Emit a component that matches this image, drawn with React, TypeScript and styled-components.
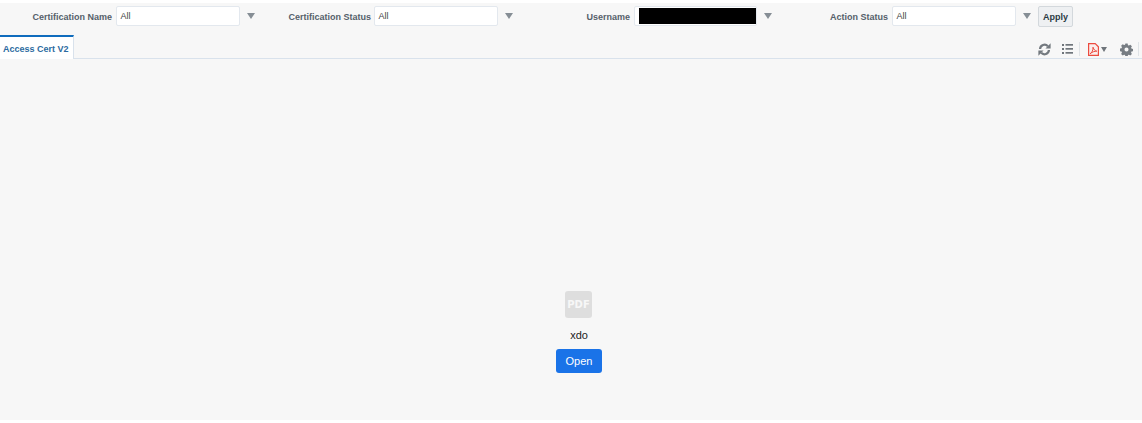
import React from "react";
import styled, { createGlobalStyle } from "styled-components";

const Global = createGlobalStyle`
  html, body { margin: 0; padding: 0; background: #fff; }
  body { font-family: "Liberation Sans", Arial, sans-serif; }
`;

const Page = styled.div`
  width: 1142px;
  height: 423px;
  padding: 3px 0;
  box-sizing: border-box;
  overflow: hidden;
`;

const Surface = styled.div`
  height: 417px;
  background: #f7f7f7;
  display: flex;
  flex-direction: column;
`;

const FilterBar = styled.div`
  height: 32px;
  padding-top: 3px;
  box-sizing: border-box;
  display: flex;
  align-items: flex-start;
`;

const Group = styled.div`
  width: 258px;
  display: flex;
  align-items: center;
  height: 20px;
  &:last-of-type { width: 265px; }
`;

const Label = styled.label<{ $w: number; $gap: number }>`
  width: ${(p) => p.$w}px;
  margin-right: ${(p) => p.$gap}px;
  padding-top: 2px;
  text-align: right;
  font-size: 9px;
  font-weight: 700;
  color: #55606a;
  white-space: nowrap;
`;

const Field = styled.div<{ $w: number }>`
  width: ${(p) => p.$w}px;
  height: 20px;
  box-sizing: border-box;
  background: #fff;
  border: 1px solid #e3e8ee;
  border-radius: 2px;
  padding: 0 3.5px;
  font-size: 9px;
  line-height: 18px;
  color: #444;
  position: relative;
`;

const Redaction = styled.div`
  position: absolute;
  left: 4px;
  top: 1px;
  width: 117px;
  height: 16px;
  background: #000;
`;

const Arrow = styled.span`
  width: 0;
  height: 0;
  margin-left: 7px;
  border-left: 4px solid transparent;
  border-right: 4px solid transparent;
  border-top: 6px solid #868e95;
`;

const ApplyButton = styled.button`
  width: 35px;
  height: 21px;
  margin-left: -1px;
  padding: 0;
  background: #eef0f2;
  border: 1px solid #d3d8dc;
  border-radius: 2px;
  font: 700 9px "Liberation Sans", Arial, sans-serif;
  color: #2b3a44;
`;

const TabRow = styled.div`
  height: 24px;
  box-sizing: border-box;
  border-bottom: 1px solid #d9e2ec;
  display: flex;
  justify-content: space-between;
  align-items: stretch;
`;

const Tab = styled.div`
  width: 74px;
  height: 24px;
  box-sizing: border-box;
  background: #fff;
  border-top: 2px solid #0f6cbd;
  border-right: 1px solid #d9e2ec;
  font-size: 9px;
  font-weight: 700;
  line-height: 24px;
  padding-left: 3px;
  color: #2c6aa0;
  white-space: nowrap;
`;

const Tools = styled.div`
  display: flex;
  align-items: center;
  padding: 5px 3px 0 0;
  height: 18px;
`;

const Tool = styled.span<{ $gap: number }>`
  display: flex;
  margin-left: ${(p) => p.$gap}px;
`;

const Divider = styled.span<{ $gap: number }>`
  width: 1px;
  height: 14px;
  margin-left: ${(p) => p.$gap}px;
  background: #dfe3e6;
`;

const Center = styled.main`
  flex: 1;
  display: flex;
  flex-direction: column;
  align-items: center;
  padding: 232px 0 0 16px;
`;

const PdfTile = styled.div`
  width: 27px;
  height: 27px;
  margin-left: -1px;
  border-radius: 3px;
  background: #dedede;
  color: #f7f7f7;
  font: 700 10px "DejaVu Sans", sans-serif;
  display: flex;
  align-items: center;
  justify-content: center;
`;

const FileName = styled.div`
  margin-top: 10px;
  font-size: 11px;
  line-height: 14px;
  color: #222;
`;

const OpenButton = styled.button`
  margin-top: 7px;
  width: 46px;
  height: 24px;
  padding: 0;
  border: 0;
  border-radius: 3px;
  background: #1a73e8;
  color: #fff;
  font: 400 11px "Liberation Sans", Arial, sans-serif;
`;

const Refresh = () => (
  <svg width="13" height="13" viewBox="0 0 14 14" fill="none" stroke="#73797f" strokeWidth="2.4">
    <path d="M2.2 6.5A4.9 4.9 0 0 1 10.6 3.4" />
    <path d="M11.8 7.5A4.9 4.9 0 0 1 3.4 10.6" />
    <path d="M8 5.8h5.6V.4z" fill="#73797f" stroke="none" />
    <path d="M6 8.2H.4v5.4z" fill="#73797f" stroke="none" />
  </svg>
);

const ListIcon = () => (
  <svg width="11" height="12" viewBox="0 0 11 12" fill="#6f757b">
    <rect x="0" y="1" width="2" height="2" />
    <rect x="0" y="5" width="2" height="2" />
    <rect x="0" y="9" width="2" height="2" />
    <rect x="3.5" y="1" width="7.5" height="1.7" />
    <rect x="3.5" y="5" width="7.5" height="1.7" />
    <rect x="3.5" y="9" width="7.5" height="1.7" />
  </svg>
);

const PdfIcon = () => (
  <svg width="11" height="13" viewBox="0 0 11 13" fill="none" stroke="#ec4b3f">
    <path d="M.6.6h6.6l3.2 3.2v8.6H.6z" fill="#fbeeed" strokeWidth="1.2" />
    <path d="M2 10.8c2-1 3.2-3.8 3-6.6 1 2.8 2 3.6 3.8 4-2-.1-4.5.6-6.8 2.6z" strokeWidth="1" />
  </svg>
);

const SmallArrow = styled.span`
  width: 0;
  height: 0;
  margin-left: 2px;
  border-left: 3.5px solid transparent;
  border-right: 3.5px solid transparent;
  border-top: 5px solid #6f757b;
`;

const Gear = () => (
  <svg width="13" height="13" viewBox="0 0 14 14">
    <path
      fill="#777d83"
      fillRule="evenodd"
      d="M5.8.6h2.4l.4 1.7 1 .45 1.5-.9 1.7 1.7-.9 1.5.45 1 1.7.4v2.4l-1.7.4-.45 1 .9 1.5-1.7 1.7-1.5-.9-1 .45-.4 1.7H5.8l-.4-1.7-1-.45-1.5.9-1.7-1.7.9-1.5-.45-1-1.7-.4V5.95l1.7-.4.45-1-.9-1.5 1.7-1.7 1.5.9 1-.45zM7 4.8a2.2 2.2 0 1 0 0 4.4 2.2 2.2 0 0 0 0-4.4z"
    />
  </svg>
);

const filters = [
  { label: "Certification Name", w: 112, gap: 4, field: 124, value: "All" },
  { label: "Certification Status", w: 113, gap: 3, field: 124, value: "All" },
  { label: "Username", w: 114, gap: 4, field: 123, value: "", redacted: true },
  { label: "Action Status", w: 114, gap: 4, field: 124, value: "All" },
];

export default function App() {
  return (
    <Page>
      <Global />
      <Surface>
        <FilterBar>
          {filters.map((f) => (
            <Group key={f.label}>
              <Label $w={f.w} $gap={f.gap}>{f.label}</Label>
              <Field $w={f.field}>
                {f.value}
                {f.redacted && <Redaction />}
              </Field>
              <Arrow />
            </Group>
          ))}
          <ApplyButton>Apply</ApplyButton>
        </FilterBar>
        <TabRow>
          <Tab>Access Cert V2</Tab>
          <Tools>
            <Tool $gap={0}><Refresh /></Tool>
            <Tool $gap={11}><ListIcon /></Tool>
            <Divider $gap={6} />
            <Tool $gap={8}><PdfIcon /></Tool>
            <SmallArrow />
            <Tool $gap={13}><Gear /></Tool>
            <Divider $gap={5} />
          </Tools>
        </TabRow>
        <Center>
          <PdfTile>PDF</PdfTile>
          <FileName>xdo</FileName>
          <OpenButton>Open</OpenButton>
        </Center>
      </Surface>
    </Page>
  );
}
